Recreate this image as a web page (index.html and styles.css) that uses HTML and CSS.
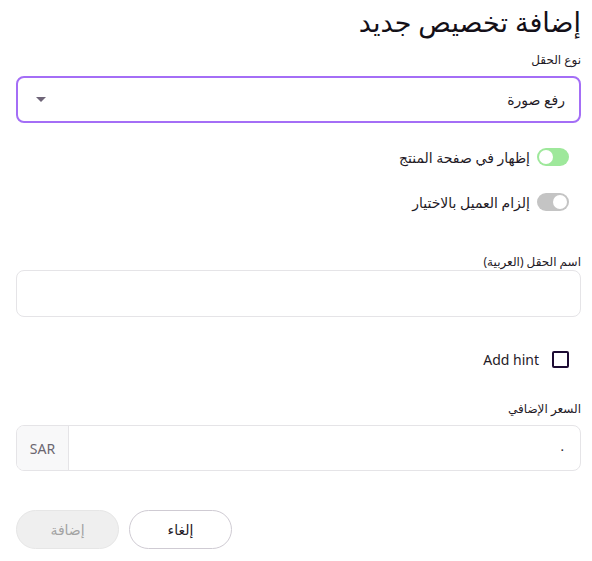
FILE: index.html
```html
<!DOCTYPE html>
<html lang="ar" dir="rtl">
<head>
<meta charset="utf-8">
<link rel="stylesheet" href="styles.css">
</head>
<body>
<div class="page">
  <h1 class="title">إضافة تخصيص جديد</h1>

  <div class="field field-type">
    <label class="label">نوع الحقل</label>
    <div class="select">
      <span class="select-value">رفع صورة</span>
      <span class="caret"></span>
    </div>
  </div>

  <div class="toggles">
    <div class="toggle-row">
      <span class="switch on"><span class="knob"></span></span>
      <span class="toggle-text">إظهار في صفحة المنتج</span>
    </div>
    <div class="toggle-row">
      <span class="switch off"><span class="knob"></span></span>
      <span class="toggle-text">إلزام العميل بالاختيار</span>
    </div>
  </div>

  <div class="field field-name">
    <label class="label label-tight">اسم الحقل (العربية)</label>
    <div class="input"></div>
  </div>

  <div class="hint-row">
    <span class="checkbox"></span>
    <span class="hint-text" dir="ltr">Add hint</span>
  </div>

  <div class="field field-price">
    <label class="label">السعر الإضافي</label>
    <div class="input price">
      <span class="price-value">٠</span>
      <span class="addon">SAR</span>
    </div>
  </div>

  <div class="actions">
    <button class="btn btn-add">إضافة</button>
    <button class="btn btn-cancel">إلغاء</button>
  </div>
</div>
</body>
</html>
```

FILE: styles.css
```css
* { box-sizing: border-box; }
html, body {
  margin: 0;
  padding: 0;
  background: #ffffff;
}
body {
  font-family: "Noto Sans", "DejaVu Sans", sans-serif;
  color: #1f1a26;
}
.page {
  width: 592px;
  padding: 0 11px 0 16px;
}
.title {
  margin: 0;
  padding-top: 4px;
  font-size: 27px;
  font-weight: 400;
  line-height: 36px;
  color: #141018;
}
.field { display: flex; flex-direction: column; }
.label {
  font-size: 12px;
  line-height: 16px;
  color: #1f1a26;
  margin-bottom: 8px;
}
.label-tight { margin-bottom: 0; }
.field-type { margin-top: 12px; }
.select {
  height: 47px;
  border: 2px solid #a46ef6;
  border-radius: 8px;
  display: flex;
  align-items: center;
  justify-content: space-between;
  padding: 0 14px 0 18px;
}
.select-value { font-size: 14px; color: #1f1a26; }
.caret {
  width: 0; height: 0;
  border-left: 5px solid transparent;
  border-right: 5px solid transparent;
  border-top: 5px solid #6f6578;
}
.toggles {
  margin-top: 25px;
  display: flex;
  flex-direction: column;
  gap: 27px;
  padding-right: 12px;
}
.toggle-row {
  display: flex;
  align-items: center;
  gap: 7px;
  height: 18px;
}
.toggle-text { font-size: 14px; color: #1f1a26; }
.switch {
  width: 32px;
  height: 18px;
  border-radius: 9px;
  display: flex;
  align-items: center;
  padding: 0 2px;
}
.switch.on { background: #9ee89b; justify-content: flex-end; }
.switch.off { background: #c4c4c4; justify-content: flex-start; }
.knob {
  width: 14px; height: 14px;
  border-radius: 50%;
  background: #ffffff;
}
.field-name { margin-top: 43px; }
.input {
  height: 47px;
  border: 1px solid #e5e4e7;
  border-radius: 8px;
}
.hint-row {
  margin-top: 34px;
  display: flex;
  align-items: center;
  gap: 13px;
  padding-right: 12px;
  height: 17px;
}
.checkbox {
  width: 17px; height: 17px;
  border: 2px solid #1d0b33;
  border-radius: 2px;
}
.hint-text { font-size: 14px; color: #1f1a26; font-family: "Noto Sans", sans-serif; }
.field-price { margin-top: 33px; }
.price {
  display: flex;
  align-items: stretch;
  justify-content: space-between;
  overflow: hidden;
  height: 46px;
}
.price-value {
  display: flex;
  align-items: center;
  padding-right: 14px;
  font-size: 14px;
  color: #3a3440;
}
.addon {
  width: 52px;
  background: #f8f8f9;
  border-right: 1px solid #e5e4e7;
  display: flex;
  align-items: center;
  justify-content: center;
  font-size: 14px;
  color: #6b6670;
  font-family: "Noto Sans", sans-serif;
}
.actions {
  margin-top: 39px;
  display: flex;
  gap: 10px;
  direction: ltr;
  justify-content: flex-start;
}
.btn {
  width: 103px;
  height: 39px;
  border-radius: 20px;
  font-family: inherit;
  font-size: 14px;
  cursor: pointer;
}
.btn-add {
  background: #efefef;
  border: 1px solid #e6e6e6;
  color: #a3a3a3;
}
.btn-cancel {
  background: #ffffff;
  border: 1px solid #cfcbd3;
  color: #1f1a26;
}
```
